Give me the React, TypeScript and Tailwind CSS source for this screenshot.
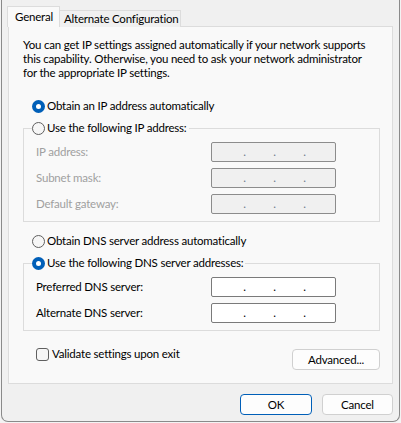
import React from 'react';

function Radio({ checked }: { checked?: boolean }) {
  return checked ? (
    <span className="flex h-[13px] w-[13px] shrink-0 items-center justify-center rounded-full bg-[#005fb8]">
      <span className="h-[5px] w-[5px] rounded-full bg-white" />
    </span>
  ) : (
    <span className="h-[13px] w-[13px] shrink-0 rounded-full border border-[#5f5f5f] bg-[#f6f6f6]" />
  );
}

function IpBox({ disabled }: { disabled?: boolean }) {
  const tone = disabled
    ? 'border-[#8c8c8c] bg-[#f0f0f0] text-[#6d7a8a]'
    : 'border-[#7a7a7a] bg-white text-black';
  return (
    <div className={`flex h-[20px] w-[125px] items-center rounded-[2px] border pl-[31px] leading-[18px] ${tone}`}>
      <span className="w-[3px] text-center">.</span>
      <span className="w-[27px]" />
      <span className="w-[3px] text-center">.</span>
      <span className="w-[27px]" />
      <span className="w-[3px] text-center">.</span>
    </div>
  );
}

function FieldRow({ label, disabled }: { label: string; disabled?: boolean }) {
  return (
    <div className="flex h-[20px] items-center justify-between">
      <span className={disabled ? 'text-[#a0a0a0]' : 'text-black'}>{label}</span>
      <IpBox disabled={disabled} />
    </div>
  );
}

function Group({ legend, checked, children }: { legend: string; checked?: boolean; children: React.ReactNode }) {
  return (
    <fieldset className="ml-[14px] mr-[12px] mt-[2px] border border-[#dcdcdc] pl-[12px] pr-[43px] pb-[7px]">
      <legend className="-ml-[4px] pr-[2px]">
        <span className="flex h-[20px] items-center gap-[2px]">
          <Radio checked={checked} />
          <span>{legend}</span>
        </span>
      </legend>
      <div className="mt-[4px] flex flex-col gap-[6px]">{children}</div>
    </fieldset>
  );
}

export default function App() {
  return (
    <div className="h-[423px] w-[401px] bg-[#f3f3f3] font-['Segoe_UI',Lato,sans-serif] text-[11.5px] tracking-[-0.2px] text-black">
      <div className="ml-px flex h-[422px] w-[399px] flex-col rounded-b-[7px] border-x border-b border-[#8a8a8a] bg-[#f0f0f0] px-[6px] pt-[6px]">
        {/* tabs */}
        <div className="relative z-10 -mb-px flex h-[21px] items-end whitespace-nowrap">
          <div className="-ml-px flex h-[21px] w-[53px] items-center border-x border-t border-[#dcdcdc] bg-[#f9f9f9] pl-[7px] pb-[1px]">
            General
          </div>
          <div className="flex h-[17px] w-[121px] items-center border-r border-t border-[#dcdcdc] bg-[#f0f0f0] pl-[4px]">
            Alternate Configuration
          </div>
        </div>

        {/* panel */}
        <div className="flex h-[358px] flex-col border border-[#dcdcdc] bg-[#f9f9f9]">
          <p className="ml-[14px] mt-[11px] whitespace-nowrap leading-[14px]">
            You can get IP settings assigned automatically if your network supports
            <br />
            this capability. Otherwise, you need to ask your network administrator
            <br />
            for the appropriate IP settings.
          </p>

          <label className="ml-[23px] mt-[16px] flex h-[20px] items-center gap-[2px]">
            <Radio checked />
            <span>Obtain an IP address automatically</span>
          </label>

          <Group legend="Use the following IP address:">
            <FieldRow label="IP address:" disabled />
            <FieldRow label="Subnet mask:" disabled />
            <FieldRow label="Default gateway:" disabled />
          </Group>

          <label className="ml-[23px] mt-[9px] flex h-[20px] items-center gap-[2px]">
            <Radio />
            <span>Obtain DNS server address automatically</span>
          </label>

          <Group legend="Use the following DNS server addresses:" checked>
            <FieldRow label="Preferred DNS server:" />
            <FieldRow label="Alternate DNS server:" />
          </Group>

          <div className="ml-[27px] mr-[12px] mt-[13px] flex items-start justify-between">
            <label className="flex h-[20px] items-center gap-[3px]">
              <span className="h-[13px] w-[13px] rounded-[3px] border border-[#5f5f5f] bg-[#f6f6f6]" />
              <span>Validate settings upon exit</span>
            </label>
            <button className="mt-[5px] h-[21px] w-[88px] rounded-[4px] border border-[#d0d0d0] bg-[#fdfdfd]">
              Advanced...
            </button>
          </div>
        </div>

        {/* footer buttons */}
        <div className="mt-[10px] flex justify-end gap-[10px]">
          <button className="h-[21px] w-[72px] rounded-[4px] border border-[#005fb8] bg-[#fdfdfd]">OK</button>
          <button className="h-[21px] w-[71px] rounded-[4px] border border-[#d0d0d0] bg-[#fdfdfd]">Cancel</button>
        </div>
      </div>
    </div>
  );
}
